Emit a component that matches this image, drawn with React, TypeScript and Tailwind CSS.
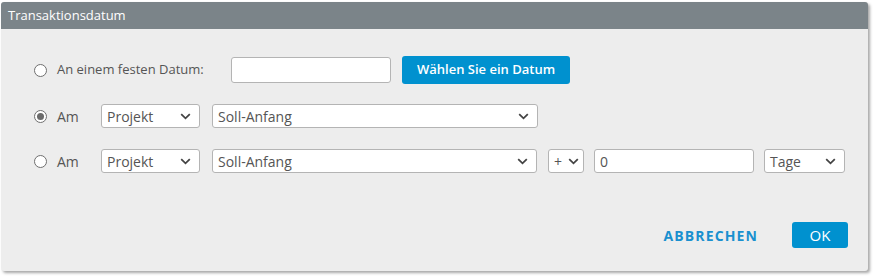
import React from "react";

const font = { fontFamily: "'Open Sans', Lato, sans-serif" };

function Radio({ checked }: { checked?: boolean }) {
  return (
    <span className="flex h-[13px] w-[13px] shrink-0 items-center justify-center rounded-full border border-[#6f6f6f] bg-white">
      {checked && <span className="h-[7px] w-[7px] rounded-full bg-[#6b6b6b]" />}
    </span>
  );
}

function Chevron() {
  return (
    <svg width="11" height="7" viewBox="0 0 11 7" className="shrink-0">
      <path d="M1.2 1.2 L5.5 5.3 L9.8 1.2" fill="none" stroke="#444" strokeWidth="1.8" />
    </svg>
  );
}

function Select({ label, className }: { label: string; className: string }) {
  return (
    <div
      className={`flex h-[24px] items-center justify-between rounded-[3px] border border-[#b4b4b4] bg-white pl-[5px] pr-[8px] text-[14px] text-[#555] ${className}`}
    >
      <span>{label}</span>
      <Chevron />
    </div>
  );
}

export default function App() {
  return (
    <div className="h-[278px] w-[874px] bg-white pl-px pt-[2px]" style={font}>
      <div className="w-[867px] overflow-hidden rounded-[3px] bg-[#ededed] shadow-[2px_2px_3px_rgba(0,0,0,0.35)]">
        <div className="flex h-[27px] items-center bg-[#7b8489] pl-[7px] text-[13px] text-white">
          Transaktionsdatum
        </div>
        <div className="flex flex-col pl-[33px] pt-[27px]">
          <div className="flex h-[28px] items-center">
            <Radio />
            <span className="ml-[10px] w-[174px] text-[13px] text-[#555]">An einem festen Datum:</span>
            <div className="h-[26px] w-[160px] rounded-[3px] border border-[#b4b4b4] bg-white" />
            <button className="ml-[11px] h-[28px] w-[168px] rounded-[3px] bg-[#0091cf] text-[13px] font-semibold text-white">
              Wählen Sie ein Datum
            </button>
          </div>
          <div className="mt-[20px] flex h-[24px] items-center">
            <Radio checked />
            <span className="ml-[10px] w-[44px] text-[14px] text-[#555]">Am</span>
            <Select label="Projekt" className="w-[99px]" />
            <Select label="Soll-Anfang" className="ml-[12px] w-[326px]" />
          </div>
          <div className="mt-[21px] flex h-[24px] items-center">
            <Radio />
            <span className="ml-[10px] w-[44px] text-[14px] text-[#555]">Am</span>
            <Select label="Projekt" className="w-[99px]" />
            <Select label="Soll-Anfang" className="ml-[12px] w-[325px]" />
            <Select label="+" className="ml-[11px] w-[36px] !pr-[4px]" />
            <div className="ml-[10px] flex h-[24px] w-[160px] items-center rounded-[3px] border border-[#b4b4b4] bg-white pl-[5px] text-[14px] text-[#555]">
              0
            </div>
            <Select label="Tage" className="ml-[10px] w-[81px]" />
          </div>
          <div className="mt-[49px] flex h-[26px] items-center justify-end pr-[20px]">
            <span className="text-[14px] font-bold tracking-[0.08em] text-[#1a90cf]">ABBRECHEN</span>
            <button className="ml-[34px] h-[26px] w-[56px] rounded-[3px] bg-[#0091cf] text-[15px] text-white">
              OK
            </button>
          </div>
          <div className="h-[23px]" />
        </div>
      </div>
    </div>
  );
}
